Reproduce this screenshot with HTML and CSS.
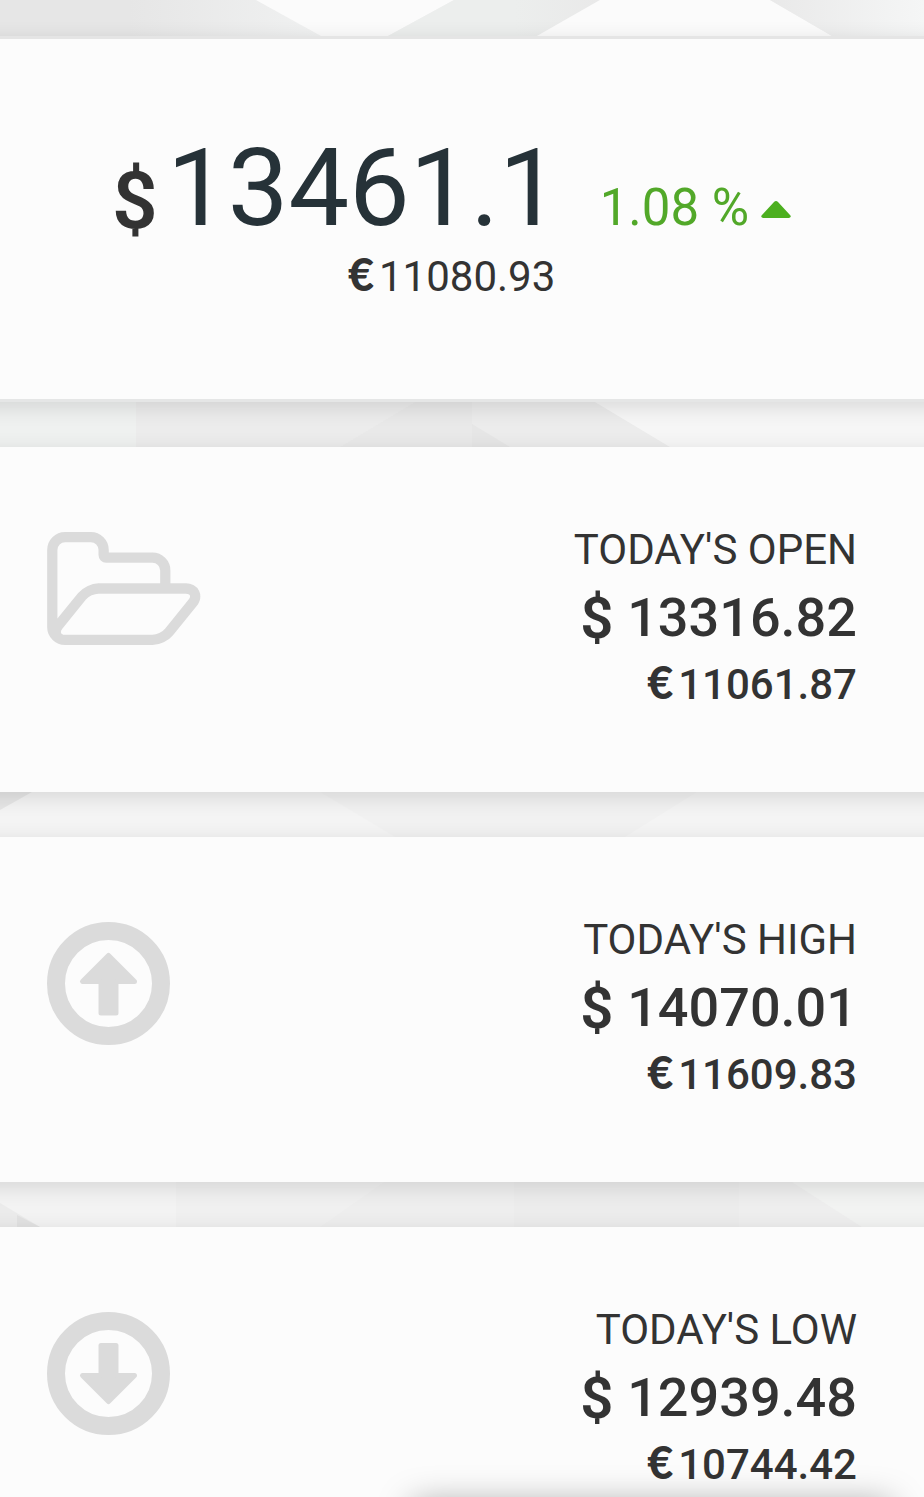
FILE: index.html
```
<!DOCTYPE html>
<html lang="en">
<head>
  <meta charset="UTF-8">
  <meta name="viewport" content="width=device-width, initial-scale=1.0">
  <title>Bitcoin Price</title>
  <link rel="stylesheet" href="styles.css">
</head>
<body>
  <svg class="strip strip-top" viewBox="0 0 924 36">
    <defs>
      <linearGradient id="fadeLeft"><stop offset="0" stop-color="#e6e6e6"/><stop offset="0.4" stop-color="#e6e6e6"/><stop offset="1" stop-color="#f0f1f1"/></linearGradient>
      <linearGradient id="fadeRight"><stop offset="0" stop-color="#e9e9e9"/><stop offset="1" stop-color="#f5f6f6"/></linearGradient>
      <linearGradient id="fadeMid"><stop offset="0.6" stop-color="#eceeed"/><stop offset="1" stop-color="#e9e9e9"/></linearGradient>
    </defs>
    <path fill="url(#fadeLeft)" d="M0 0h256l65 36H0z"/>
    <path fill="#fbfbfb" d="M256 0h198l-66 36h-67z"/>
    <path fill="url(#fadeMid)" d="M454 0h146l-63 36H388z"/>
    <path fill="#fbfbfb" d="M600 0h170l62 36H537z"/>
    <path fill="url(#fadeRight)" d="M770 0h154v36h-92z"/>
  </svg>

  <div class="card price-card">
    <div class="price-row">
      <span class="currency">$</span>
      <span class="price">13461.1</span>
      <span class="change">1.08 %</span>
      <svg class="caret" viewBox="0 0 30 17"><path d="M2 17q-3-1-1-3L13 1q2-2 4 0l12 13q2 2-1 3z"/></svg>
    </div>
    <div class="euro-row"><span class="euro">€</span>11080.93</div>
  </div>

  <svg class="strip" viewBox="0 0 924 45">
    <path fill="#eff1f0" d="M0 0h136v45H0z"/>
    <path fill="#ececec" d="M136 0h279l-75 45H136z"/>
    <path fill="#e9e9e9" d="M415 0h57v45H340z"/>
    <path fill="#ececec" d="M472 0h123l75 45H472z"/>
    <path fill="#e6e6e6" d="M472 22l38 23h-38z"/>
    <path fill="#f6f6f6" d="M595 0h329v45H670z"/>
  </svg>

  <div class="card stat-card">
    <svg class="icon folder" viewBox="64 128 1909 1408"><path d="M1845 931q0-35-53-35h-1088q-40 0-85.5 21.5t-71.5 52.5l-294 363q-18 24-18 40 0 35 53 35h1088q40 0 86-22t71-53l294-363q18-22 18-39zm-1141-163h768v-160q0-40-28-68t-68-28h-576q-40 0-68-28t-28-68v-64q0-40-28-68t-68-28h-320q-40 0-68 28t-28 68v853l256-315q44-53 116-87.5t140-34.5zm1269 163q0 62-46 120l-295 363q-43 53-116 87.5t-140 34.5h-1088q-92 0-158-66t-66-158v-960q0-92 66-158t158-66h320q92 0 158 66t66 158v32h544q92 0 158 66t66 158v160h192q54 0 99 24.5t67 70.5q15 32 15 68z"/></svg>
    <div class="stat">
      <div class="label">TODAY'S OPEN</div>
      <div class="dollars"><span class="currency">$</span>13316.82</div>
      <div class="euros"><span class="euro">€</span>11061.87</div>
    </div>
  </div>

  <svg class="strip" viewBox="0 0 924 45">
    <path fill="#f4f4f4" d="M0 0h924v45H0z"/>
    <path fill="#e6e6e6" d="M0 0h32L0 18z"/>
    <path fill="#f1f1f1" d="M320 0h377l-72 45H395z"/>
  </svg>

  <div class="card stat-card">
    <svg class="icon circle" viewBox="0 0 123 123">
      <circle cx="61.5" cy="61.5" r="52.5"/>
      <path d="M61.500 33.500L35.500 59.500H54V91H69V59.500H87.500z"/>
    </svg>
    <div class="stat">
      <div class="label">TODAY'S HIGH</div>
      <div class="dollars"><span class="currency">$</span>14070.01</div>
      <div class="euros"><span class="euro">€</span>11609.83</div>
    </div>
  </div>

  <svg class="strip" viewBox="0 0 924 45">
    <path fill="#f3f3f3" d="M0 0h176v45H0z"/>
    <path fill="#ebebeb" d="M0 21l40 24H0z"/>
    <path fill="#e2e2e2" d="M17 33l23 12H17z"/>
    <path fill="#f0f0f0" d="M176 0h208l-64 45H176z"/>
    <path fill="#eeeeee" d="M384 0h130v45H320z"/>
    <path fill="#ececec" d="M514 0h225v45H514z"/>
    <path fill="#eeeeee" d="M739 0h53l70 45H739z"/>
    <path fill="#f2f3f2" d="M792 0h132v45h-62z"/>
  </svg>

  <div class="card stat-card last">
    <svg class="icon circle" viewBox="0 0 123 123">
      <circle cx="61.5" cy="61.5" r="52.5"/>
      <path d="M61.500 89.500L35.500 63.500H54V33.500H69V63.500H87.500z"/>
    </svg>
    <div class="stat">
      <div class="label">TODAY'S LOW</div>
      <div class="dollars"><span class="currency">$</span>12939.48</div>
      <div class="euros"><span class="euro">€</span>10744.42</div>
    </div>
  </div>

  <div class="snackbar"></div>
</body>
</html>
```
FILE: styles.css
```
body {
  margin: 0;
  height: 1497px;
  overflow: hidden;
  background: #f0f0f0;
  color: #333;
  font-family: Roboto, sans-serif;
}

.strip {
  display: block;
  width: 924px;
  height: 45px;
}

.strip-top {
  height: 36px;
}

/* wider than the page so the shadow does not fade at the sides */
.card {
  position: relative;
  box-sizing: border-box;
  height: 345px;
  margin: 0 -30px;
  background: #fcfcfc;
  box-shadow: 0 5px 20px rgba(0, 0, 0, 0.12);
}

.price-card {
  height: 366px;
  padding-top: 86px;
  border-top: 3px solid #e5e5e5;
  border-bottom: 3px solid #e5e6e6;
}

.price-row {
  display: flex;
  align-items: baseline;
  height: 127px;
  padding-left: 142px;
  line-height: 127px;
}

.currency {
  font-weight: 600;
}

.euro {
  display: inline-block;
  width: 31px;
  font-family: Lato, sans-serif;
  font-size: 45px;
  font-weight: 900;
  line-height: 40px;
  text-align: left;
}

.price-row .currency {
  position: relative;
  top: 3px;
  width: 55px;
  font-size: 80px;
}

.price {
  color: #263238;
  font-size: 108px;
}

.change {
  margin-left: 40px;
  color: #52a829;
  font-size: 51px;
}

.caret {
  align-self: flex-start;
  width: 30px;
  height: 17px;
  margin-top: 76px;
  margin-left: 12px;
  fill: #4caf1f;
}

.euro-row {
  padding-left: 378px;
  font-size: 42px;
  line-height: 50px;
}

.stat-card {
  display: flex;
  justify-content: space-between;
  padding: 78px 97px 0 77px;
}

.last {
  height: 270px;
}

.icon {
  margin-top: 7px;
  fill: #dbdbdb;
}

.folder {
  width: 153.5px;
  height: 113px;
}

.circle {
  width: 123px;
  height: 123px;
}

.circle circle {
  fill: none;
  stroke: #dbdbdb;
  stroke-width: 18;
}

.circle path {
  stroke: #dbdbdb;
  stroke-width: 5;
  stroke-linejoin: round;
}

.stat {
  text-align: right;
}

.label {
  font-size: 42px;
  line-height: 50px;
}

.dollars {
  height: 68px;
  margin-top: 7px;
  font-size: 54px;
  font-weight: 500;
  line-height: 68px;
}

.dollars .currency {
  position: relative;
  top: 2px;
  display: inline-block;
  width: 47px;
  font-size: 58px;
  text-align: left;
}

.euros {
  margin-top: 10px;
  font-size: 42px;
  font-weight: 500;
  line-height: 50px;
}

/* sits just under the fold, only its shadow shows */
.snackbar {
  position: fixed;
  left: 412px;
  bottom: -86px;
  width: 480px;
  height: 80px;
  border-radius: 6px;
  box-shadow: 0 0 34px rgba(0, 0, 0, 0.35);
}
```
